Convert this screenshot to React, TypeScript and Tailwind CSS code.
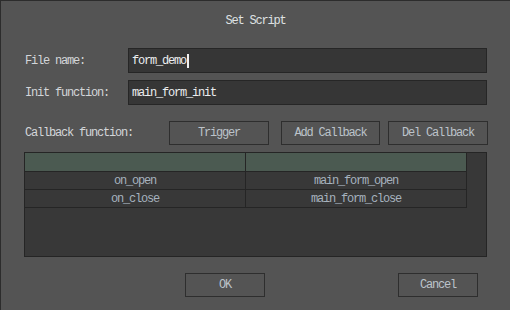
import React from 'react';

const mono = "font-['Liberation_Mono','DejaVu_Sans_Mono',monospace] text-[12px] tracking-[-1.2px]";

function Field({ label, value, caret }: { label: string; value: string; caret?: boolean }) {
  return (
    <div className="flex h-[25px] items-center">
      <div className="w-[104px] pl-[1px] text-[#d3d6d9]">{label}</div>
      <div className="flex h-full w-[359px] items-center border border-[#262626] bg-[#363636] pl-[3px] text-[#eceef0]">
        <span>{value}</span>
        <span className={caret ? 'ml-[1px] h-[14px] w-[2px] bg-[#f0f0f0]' : 'hidden'} />
      </div>
    </div>
  );
}

function Btn({ label, w }: { label: string; w: string }) {
  return (
    <button className={`flex h-[24px] items-center justify-center border border-[#2e2e2e] bg-[#545454] text-[#bcc3ca] ${w}`}>
      {label}
    </button>
  );
}

const rows = [
  ['on_open', 'main_form_open'],
  ['on_close', 'main_form_close'],
];

export default function App() {
  return (
    <div className={`flex h-[310px] w-[510px] flex-col overflow-hidden border-l border-t border-[#2c2c2c] bg-[#545454] pl-[23px] ${mono}`}>
      <div className="flex h-[47px] items-center justify-center pb-[7px] pr-[23px] text-[#dfe1e3]">Set Script</div>

      <Field label="File name:" value="form_demo" caret />
      <div className="mt-[7px]">
        <Field label="Init function:" value="main_form_init" />
      </div>

      <div className="mt-[16px] flex h-[24px] items-center">
        <div className="w-[145px] pl-[1px] text-[#d3d6d9]">Callback function:</div>
        <Btn label="Trigger" w="w-[100px]" />
        <div className="ml-[12px]">
          <Btn label="Add Callback" w="w-[99px]" />
        </div>
        <div className="ml-[8px]">
          <Btn label="Del Callback" w="w-[100px]" />
        </div>
      </div>

      <div className="mt-[7px] h-[105px] w-[463px] border border-[#252525] bg-[#383838]">
        <div className="grid w-[442px] grid-cols-2">
          <div className="h-[19px] border-b border-r border-[#252525] bg-[#4b5a51]" />
          <div className="h-[19px] border-b border-r border-[#252525] bg-[#4b5a51]" />
          {rows.map(([a, b]) => (
            <React.Fragment key={a}>
              <div className="flex h-[18px] items-center justify-center border-b border-r border-[#252525] text-[#a6b2be]">{a}</div>
              <div className="flex h-[18px] items-center justify-center border-b border-r border-[#252525] text-[#a6b2be]">{b}</div>
            </React.Fragment>
          ))}
        </div>
      </div>

      <div className="mt-[16px] flex h-[24px]">
        <div className="ml-[161px]">
          <Btn label="OK" w="w-[80px]" />
        </div>
        <div className="ml-[133px]">
          <Btn label="Cancel" w="w-[80px]" />
        </div>
      </div>
    </div>
  );
}
